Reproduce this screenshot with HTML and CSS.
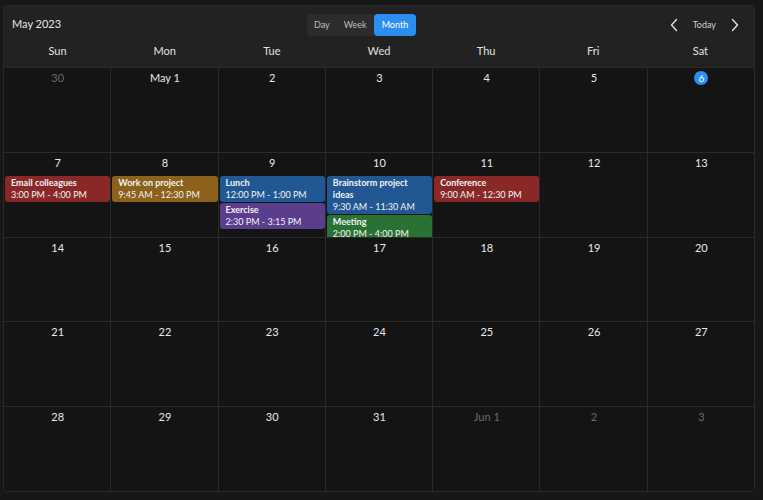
FILE: index.html
```html
<!DOCTYPE html>
<html>
<head>
<meta charset="utf-8">
<title>Calendar - May 2023</title>
<link rel="stylesheet" href="styles.css">
</head>
<body>
<div class="calendar">
  <div class="toolbar">
    <div class="title">May 2023</div>
    <div class="views">
      <span class="view">Day</span>
      <span class="view">Week</span>
      <span class="view active">Month</span>
    </div>
    <div class="nav">
      <svg class="arrow" width="10" height="14" viewBox="0 0 10 14"><path d="M7.5 1.5 L2.5 7 L7.5 12.5" fill="none" stroke="#e0e0e0" stroke-width="1.4" stroke-linecap="round" stroke-linejoin="round"/></svg>
      <span class="today">Today</span>
      <svg class="arrow" width="10" height="14" viewBox="0 0 10 14"><path d="M2.5 1.5 L7.5 7 L2.5 12.5" fill="none" stroke="#e0e0e0" stroke-width="1.4" stroke-linecap="round" stroke-linejoin="round"/></svg>
    </div>
  </div>
  <div class="weekdays">
    <div>Sun</div><div>Mon</div><div>Tue</div><div>Wed</div><div>Thu</div><div>Fri</div><div>Sat</div>
  </div>
  <div class="grid">
    <div class="cell"><div class="num dim">30</div></div>
    <div class="cell"><div class="num">May 1</div></div>
    <div class="cell"><div class="num">2</div></div>
    <div class="cell"><div class="num">3</div></div>
    <div class="cell"><div class="num">4</div></div>
    <div class="cell"><div class="num">5</div></div>
    <div class="cell"><div class="num"><span class="now">6</span></div></div>

    <div class="cell"><div class="num">7</div>
      <div class="event red"><b>Email colleagues</b><span>3:00 PM - 4:00 PM</span></div>
    </div>
    <div class="cell"><div class="num">8</div>
      <div class="event orange"><b>Work on project</b><span>9:45 AM - 12:30 PM</span></div>
    </div>
    <div class="cell"><div class="num">9</div>
      <div class="event blue"><b>Lunch</b><span>12:00 PM - 1:00 PM</span></div>
      <div class="event purple"><b>Exercise</b><span>2:30 PM - 3:15 PM</span></div>
    </div>
    <div class="cell"><div class="num">10</div>
      <div class="event blue"><b>Brainstorm project ideas</b><span>9:30 AM - 11:30 AM</span></div>
      <div class="event green"><b>Meeting</b><span>2:00 PM - 4:00 PM</span></div>
    </div>
    <div class="cell"><div class="num">11</div>
      <div class="event red"><b>Conference</b><span>9:00 AM - 12:30 PM</span></div>
    </div>
    <div class="cell"><div class="num">12</div></div>
    <div class="cell"><div class="num">13</div></div>

    <div class="cell"><div class="num">14</div></div>
    <div class="cell"><div class="num">15</div></div>
    <div class="cell"><div class="num">16</div></div>
    <div class="cell"><div class="num">17</div></div>
    <div class="cell"><div class="num">18</div></div>
    <div class="cell"><div class="num">19</div></div>
    <div class="cell"><div class="num">20</div></div>

    <div class="cell"><div class="num">21</div></div>
    <div class="cell"><div class="num">22</div></div>
    <div class="cell"><div class="num">23</div></div>
    <div class="cell"><div class="num">24</div></div>
    <div class="cell"><div class="num">25</div></div>
    <div class="cell"><div class="num">26</div></div>
    <div class="cell"><div class="num">27</div></div>

    <div class="cell"><div class="num">28</div></div>
    <div class="cell"><div class="num">29</div></div>
    <div class="cell"><div class="num">30</div></div>
    <div class="cell"><div class="num">31</div></div>
    <div class="cell"><div class="num dim">Jun 1</div></div>
    <div class="cell"><div class="num dim">2</div></div>
    <div class="cell"><div class="num dim">3</div></div>
  </div>
</div>
</body>
</html>
```

FILE: styles.css
```css
* {
  box-sizing: border-box;
  font-family: Lato, "Noto Sans", sans-serif;
}
html, body {
  height: 100%;
}
body {
  margin: 0;
  padding: 5px 8px 8px 3px;
  background-color: #171717;
  color: #e8e8e8;
}
.calendar {
  height: 100%;
  display: flex;
  flex-direction: column;
  background-color: #141414;
  border: 1px solid #2a2a2a;
  border-radius: 4px;
  overflow: hidden;
}
.toolbar {
  flex-shrink: 0;
  display: flex;
  align-items: center;
  height: 34px;
  padding: 0 14px 0 8px;
  background-color: #222222;
}
.title {
  width: 295px;
  font-size: 11px;
  color: #e6e6e6;
}
.views {
  display: flex;
  height: 22px;
  background-color: #2c2c2c;
  border-radius: 4px;
  margin-top: 3px;
}
.view {
  display: flex;
  align-items: center;
  padding: 0 7px;
  font-size: 9px;
  color: #bdbdbd;
  border-radius: 4px;
}
.view.active {
  padding: 0 8px;
  background-color: #2b8ff2;
  color: #ffffff;
}
.nav {
  margin-left: auto;
  display: flex;
  align-items: center;
  gap: 10px;
  margin-top: 3px;
}
.today {
  font-size: 9px;
  color: #cfcfcf;
  padding: 0 4px;
}
.weekdays {
  flex-shrink: 0;
  display: grid;
  grid-template-columns: repeat(7, 1fr);
  height: 27px;
  background-color: #222222;
  font-size: 11px;
  color: #e0e0e0;
  text-align: center;
}
.weekdays div {
  padding-top: 4px;
}
.grid {
  flex: 1;
  min-height: 0;
  display: grid;
  grid-template-columns: repeat(7, minmax(0, 1fr));
  grid-template-rows: repeat(5, minmax(0, 1fr));
  gap: 1px;
  background-color: #2a2a2a;
  border-top: 1px solid #2a2a2a;
}
.cell {
  background-color: #141414;
  overflow: hidden;
  padding: 0 0 0 1px;
}
.num {
  height: 23px;
  padding-top: 3px;
  text-align: center;
  font-size: 11px;
  color: #e8e8e8;
}
.num.dim {
  color: #6a6a6a;
}
.now {
  display: inline-block;
  width: 14px;
  height: 14px;
  line-height: 14px;
  border-radius: 50%;
  background-color: #2b8ff2;
  color: #ffffff;
  font-size: 10px;
}
.event {
  margin: 0 0 1px 0;
  padding: 1px 6px;
  border-radius: 3px;
  font-size: 9px;
  line-height: 12px;
  color: #f2f2f2;
}
.event b {
  display: block;
  font-weight: bold;
}
.event span {
  display: block;
}
.red { background-color: #8a2828; }
.orange { background-color: #8b611c; }
.blue { background-color: #215893; }
.purple { background-color: #5a3d8d; }
.green { background-color: #2a7234; }
```
